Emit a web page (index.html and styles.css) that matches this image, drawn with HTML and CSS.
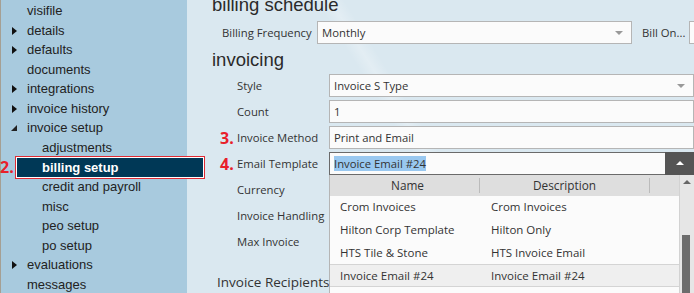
FILE: index.html
```html
<!DOCTYPE html>
<html lang="en">
<head>
  <meta charset="UTF-8" />
  <title>Billing Setup</title>
  <link rel="stylesheet" href="styles.css">
</head>
<body>
  <div class="page">
    <div class="sidebar">
      <ul class="tree">
        <li class="leaf">visifile</li>
        <li class="closed">details</li>
        <li class="closed">defaults</li>
        <li class="leaf">documents</li>
        <li class="closed">integrations</li>
        <li class="closed">invoice history</li>
        <li class="open">invoice setup</li>
        <li class="child">adjustments</li>
        <li class="child active"><span class="step step-side">2.</span>billing setup</li>
        <li class="child">credit and payroll</li>
        <li class="child">misc</li>
        <li class="child">peo setup</li>
        <li class="child">po setup</li>
        <li class="closed">evaluations</li>
        <li class="leaf">messages</li>
      </ul>
    </div>

    <div class="main">
      <h2>billing schedule</h2>
      <div class="schedule-row">
        <span class="label freq-label">Billing Frequency</span>
        <div class="select freq">Monthly<span class="arrow"></span></div>
        <span class="label bill-on">Bill On...</span>
        <div class="select stub"></div>
      </div>

      <h2>invoicing</h2>
      <div class="form">
        <span class="label">Style</span>
        <div class="select">Invoice S Type<span class="arrow"></span></div>

        <span class="label">Count</span>
        <div class="select">1</div>

        <span class="label"><span class="step">3.</span>Invoice Method</span>
        <div class="select">Print and Email</div>

        <span class="label"><span class="step">4.</span>Email Template</span>
        <div class="combo">
          <div class="select open-select"><span class="selected-text">Invoice Email #24</span><span class="toggle"></span></div>
          <div class="dropdown">
            <div class="dd-head">
              <span>Name</span>
              <span>Description</span>
            </div>
            <div class="dd-row"><span>Crom Invoices</span><span>Crom Invoices</span></div>
            <div class="dd-row"><span>Hilton Corp Template</span><span>Hilton Only</span></div>
            <div class="dd-row"><span>HTS Tile &amp; Stone</span><span>HTS Invoice Email</span></div>
            <div class="dd-row hover"><span>Invoice Email #24</span><span>Invoice Email #24</span></div>
            <div class="dd-row"><span></span><span></span></div>
            <div class="scrollbar"><span class="up"></span><span class="thumb"></span></div>
          </div>
        </div>

        <span class="label">Currency</span>
        <div></div>
        <span class="label">Invoice Handling</span>
        <div></div>
        <span class="label">Max Invoice</span>
        <div></div>
      </div>

      <div class="recipients">Invoice Recipients</div>
    </div>
  </div>
</body>
</html>
```

FILE: styles.css
```css
body {
  margin: 0;
  width: 694px;
  height: 293px;
  overflow: hidden;
  font-family: "Liberation Sans", Arial, sans-serif;
  background: #dae8f0;
}

.page {
  display: flex;
  height: 293px;
}

.sidebar {
  width: 186px;
  flex: none;
  background: #a8cade;
  border-left: 1px solid #a59f93;
  position: relative;
  z-index: 2;
}

.tree {
  list-style: none;
  margin: 0;
  padding: 1px 0 0;
}

.tree li {
  position: relative;
  height: 19.57px;
  line-height: 19.57px;
  padding-left: 26px;
  font-size: 13px;
  color: #222;
  white-space: nowrap;
}

.tree li.child {
  padding-left: 41px;
}

.tree li.closed::before {
  content: "";
  position: absolute;
  left: 11px;
  top: 6px;
  border-left: 5px solid #111;
  border-top: 4px solid transparent;
  border-bottom: 4px solid transparent;
}

.tree li.open::before {
  content: "";
  position: absolute;
  left: 10px;
  top: 7px;
  border-right: 6px solid #222;
  border-top: 6px solid transparent;
}

.tree li.active {
  margin-left: 16px;
  margin-right: -16px;
  padding-left: 25px;
  background: #003856;
  color: #fff;
  font-weight: bold;
  box-shadow: 0 0 0 1px #fff, 0 0 0 2px #df2a33;
}

.step {
  color: #e8202a;
  font-family: "Open Sans", sans-serif;
  font-weight: bold;
  font-size: 16px;
  margin-right: 3px;
}

.step-side {
  position: absolute;
  left: -17px;
  top: 0;
}

.main {
  flex: 1;
  padding-left: 25px;
  margin-top: -6px;
  font-family: "Open Sans", sans-serif;
  font-size: 11.3px;
  color: #333;
  background: linear-gradient(58deg, transparent 44%, rgba(255, 255, 255, 0.25) 46%, transparent 48%);
}

.main h2 {
  margin: 0;
  font-family: "Liberation Sans", Arial, sans-serif;
  font-weight: normal;
  font-size: 18.5px;
  line-height: 22px;
  color: #2a2a2a;
}

.label {
  display: flex;
  align-items: center;
  height: 23px;
  white-space: nowrap;
}

.select {
  position: relative;
  box-sizing: border-box;
  height: 23px;
  line-height: 21px;
  padding-left: 4px;
  background: #fbfbfb;
  border: 1px solid #b5b5b5;
  white-space: nowrap;
}

.arrow {
  position: absolute;
  right: 8px;
  top: 9px;
  border-top: 4px solid #999;
  border-left: 4px solid transparent;
  border-right: 4px solid transparent;
}

.schedule-row {
  display: flex;
  align-items: center;
  margin: 5px 0 5px 10px;
}

.schedule-row .freq-label {
  width: 95px;
}

.schedule-row .freq {
  width: 315px;
}

.schedule-row .bill-on {
  margin-left: 10px;
}

.schedule-row .stub {
  width: 20px;
  margin-left: 4px;
}

.form {
  display: grid;
  grid-template-columns: 92px 365px;
  grid-auto-rows: 23px;
  row-gap: 3px;
  margin: 3px 0 0 25px;
}

.form .label .step {
  position: absolute;
  margin-left: -17px;
}

.combo {
  position: relative;
  z-index: 3;
}

.open-select {
  border-color: #6a6a6a;
  padding-right: 30px;
}

.selected-text {
  background: #99c8f0;
  color: #333;
}

.toggle {
  position: absolute;
  right: -1px;
  top: -1px;
  width: 29px;
  height: 23px;
  background: #555;
}

.toggle::after {
  content: "";
  position: absolute;
  left: 11px;
  top: 9px;
  border-bottom: 4px solid #fff;
  border-left: 4px solid transparent;
  border-right: 4px solid transparent;
}

.dropdown {
  position: absolute;
  top: 23px;
  left: 0;
  width: 365px;
  height: 130px;
  background: #fbfbfb;
  border-left: 1px solid #b5b5b5;
  box-sizing: border-box;
}

.dd-head,
.dd-row {
  display: grid;
  grid-template-columns: 150px 170px;
  margin-right: 15px;
}

.dd-head {
  height: 21px;
  line-height: 21px;
  background: #dedede;
  text-align: center;
  color: #333;
  font-size: 11.8px;
}

.dd-head span {
  border-right: 1px solid #bbb;
  margin: 3px 0;
  line-height: 15px;
}

.dd-head span:first-child {
  padding-left: 6px;
}

.dd-row {
  height: 22.8px;
  line-height: 22px;
  padding-left: 10px;
  font-size: 11.5px;
}

.dd-row span:last-child {
  padding-left: 1px;
}

.dd-row.hover {
  background: #efefef;
  border-top: 1px solid #d4d4d4;
  border-bottom: 1px solid #d4d4d4;
  height: 21px;
}

.scrollbar {
  position: absolute;
  right: 0;
  top: 0;
  width: 14px;
  height: 130px;
  background: #e6e6e6;
  border-left: 1px solid #d2d2d2;
}

.scrollbar .up {
  position: absolute;
  left: 3px;
  top: 5px;
  border-bottom: 4px solid #666;
  border-left: 4px solid transparent;
  border-right: 4px solid transparent;
}

.scrollbar .thumb {
  position: absolute;
  left: 2px;
  top: 60px;
  width: 8px;
  height: 70px;
  background: #6c6c6c;
}

.recipients {
  margin: 20px 0 0 5px;
  font-size: 13.5px;
  color: #333;
}
```
